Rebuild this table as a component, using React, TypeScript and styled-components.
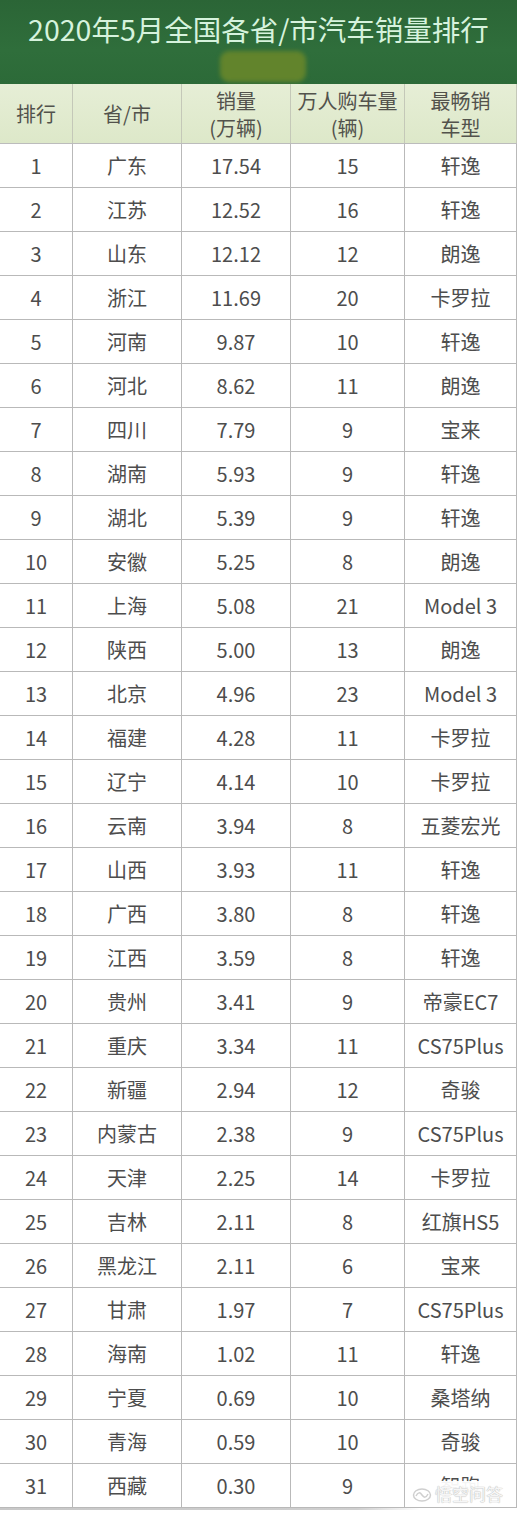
import * as React from "react";
import styled, { createGlobalStyle } from "styled-components";

const GlobalStyle = createGlobalStyle`
  html, body {
    margin: 0;
    padding: 0;
    background: #ffffff;
  }
  body {
    font-family: "Noto Sans CJK SC", "Noto Sans", sans-serif;
  }
`;

type Row = [number, string, string, string, string];

const rows: Row[] = [
  [1, "广东", "17.54", "15", "轩逸"],
  [2, "江苏", "12.52", "16", "轩逸"],
  [3, "山东", "12.12", "12", "朗逸"],
  [4, "浙江", "11.69", "20", "卡罗拉"],
  [5, "河南", "9.87", "10", "轩逸"],
  [6, "河北", "8.62", "11", "朗逸"],
  [7, "四川", "7.79", "9", "宝来"],
  [8, "湖南", "5.93", "9", "轩逸"],
  [9, "湖北", "5.39", "9", "轩逸"],
  [10, "安徽", "5.25", "8", "朗逸"],
  [11, "上海", "5.08", "21", "Model 3"],
  [12, "陕西", "5.00", "13", "朗逸"],
  [13, "北京", "4.96", "23", "Model 3"],
  [14, "福建", "4.28", "11", "卡罗拉"],
  [15, "辽宁", "4.14", "10", "卡罗拉"],
  [16, "云南", "3.94", "8", "五菱宏光"],
  [17, "山西", "3.93", "11", "轩逸"],
  [18, "广西", "3.80", "8", "轩逸"],
  [19, "江西", "3.59", "8", "轩逸"],
  [20, "贵州", "3.41", "9", "帝豪EC7"],
  [21, "重庆", "3.34", "11", "CS75Plus"],
  [22, "新疆", "2.94", "12", "奇骏"],
  [23, "内蒙古", "2.38", "9", "CS75Plus"],
  [24, "天津", "2.25", "14", "卡罗拉"],
  [25, "吉林", "2.11", "8", "红旗HS5"],
  [26, "黑龙江", "2.11", "6", "宝来"],
  [27, "甘肃", "1.97", "7", "CS75Plus"],
  [28, "海南", "1.02", "11", "轩逸"],
  [29, "宁夏", "0.69", "10", "桑塔纳"],
  [30, "青海", "0.59", "10", "奇骏"],
  [31, "西藏", "0.30", "9", "智跑"],
];

const widths = [73, 109, 109, 114, 112];

const Page = styled.div`
  position: relative;
  width: 519px;
  height: 1514px;
  overflow: hidden;
  background: #ffffff;
`;

const TitleBand = styled.div`
  position: relative;
  width: 517px;
  height: 84px;
  background: linear-gradient(180deg, #2b6536 0%, #2f6e3b 60%, #2c6a38 100%);
  display: flex;
  justify-content: center;
  overflow: hidden;
`;

const Title = styled.h1`
  position: relative;
  z-index: 1;
  margin: 0;
  padding-top: 9px;
  font-size: 28.5px;
  line-height: 40px;
  font-weight: 400;
  color: #d6f3dd;
  font-family: "Noto Sans CJK SC", "Noto Sans", sans-serif;
`;

const Smudge = styled.span`
  position: absolute;
  left: 220px;
  top: 51px;
  width: 86px;
  height: 31px;
  border-radius: 9px;
  background: #62842c;
  filter: blur(2px);
`;

const Table = styled.div`
  display: flex;
  flex-direction: column;
  width: 517px;
`;

const HeaderRow = styled.div`
  display: flex;
  height: 60px;
  background: linear-gradient(180deg, #e6eed6 0%, #dde8c9 100%);
  border-bottom: 1px solid #bcbcbc;
  box-sizing: border-box;
`;

const BodyRow = styled.div`
  display: flex;
  height: 44px;
  border-bottom: 1px solid #b9b9b9;
  box-sizing: border-box;
  background: #ffffff;
`;

const Cell = styled.div<{ $w: number }>`
  width: ${(p) => p.$w}px;
  flex: none;
  box-sizing: border-box;
  border-right: 1px solid #b9b9b9;
  display: flex;
  align-items: center;
  justify-content: center;
  text-align: center;
  font-size: 20px;
  color: #4d4d4d;
  white-space: nowrap;
`;

const HeadCell = styled(Cell)`
  line-height: 27px;
  color: #52524c;
  border-right-color: #c4c8b8;
`;

const BottomRule = styled.div`
  width: 420px;
  height: 2px;
  background: linear-gradient(90deg, #c8c8c8 0%, #cfcfcf 85%, rgba(220, 220, 220, 0) 100%);
`;

const Watermark = styled.div`
  position: absolute;
  left: 407px;
  top: 1481px;
  width: 108px;
  height: 25px;
  background: rgba(255, 255, 255, 0.94);
  display: flex;
  align-items: center;
  gap: 3px;
  padding-left: 5px;
  box-sizing: border-box;
  font-size: 17px;
  line-height: 25px;
  white-space: nowrap;
  color: #f6f6f6;
  text-shadow: 0 0 1px #bbbbbb, 0 0 1px #bbbbbb;
`;

const headers: React.ReactNode[] = [
  "排行",
  "省/市",
  <>销量<br />(万辆)</>,
  <>万人购车量<br />(辆)</>,
  <>最畅销<br />车型</>,
];

export default function App() {
  return (
    <Page>
      <GlobalStyle />
      <TitleBand>
        <Smudge />
        <Title>2020年5月全国各省/市汽车销量排行</Title>
      </TitleBand>
      <Table>
        <HeaderRow>
          {headers.map((h, i) => (
            <HeadCell key={i} $w={widths[i]}>
              <span>{h}</span>
            </HeadCell>
          ))}
        </HeaderRow>
        {rows.map((r) => (
          <BodyRow key={r[0]}>
            {r.map((v, i) => (
              <Cell key={i} $w={widths[i]}>
                {v}
              </Cell>
            ))}
          </BodyRow>
        ))}
      </Table>
      <BottomRule />
      <Watermark>
        <svg width="20" height="16" viewBox="0 0 20 16">
          <ellipse cx="10" cy="9" rx="8.5" ry="6" fill="none" stroke="#cfcfcf" strokeWidth="1.5" />
          <path d="M4 10 C6 6, 8 6, 10 9 C12 12, 14 12, 16 8" fill="none" stroke="#cfcfcf" strokeWidth="1.5" />
        </svg>
        <span>悟空问答</span>
      </Watermark>
    </Page>
  );
}
